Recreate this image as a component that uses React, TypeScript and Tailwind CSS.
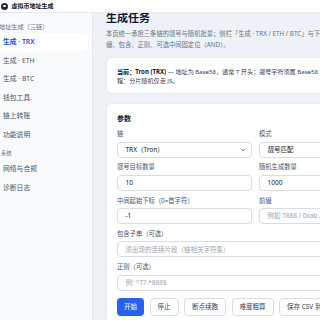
import { ChevronDown } from 'lucide-react'

const navItems = ['生成 · ETH', '生成 · BTC', '钱包工具', '链上转账', '功能说明']
const sysItems = ['网络与合规', '诊断日志']

const Field = ({ label, value, placeholder, wide, select }: { label: string; value?: string; placeholder?: string; wide?: boolean; select?: boolean }) => {
  return (
    <div className={`flex flex-col gap-[3.5px] ${wide ? 'col-span-2' : ''}`}>
      <div className="text-[6.3px] leading-[9px] h-[9px] text-[#475569] whitespace-nowrap">{label}</div>
      <div className="h-[16px] rounded-[4px] border border-[#d6dde6] bg-white flex items-center pl-[7.5px] pr-[5px] text-[6.5px] whitespace-nowrap overflow-hidden">
        {value ? <span className="text-[#111827] flex-1">{value}</span> : <span className="text-[#9aa3af] flex-1">{placeholder}</span>}
        {select && <ChevronDown size={6} strokeWidth={3} className="text-[#374151]" />}
      </div>
    </div>
  )
}

const App = () => {
  return (
    <div className="w-[320px] h-[320px] overflow-hidden flex flex-col bg-[#eef2f7] font-['Noto_Sans','Noto_Sans_CJK_SC',sans-serif]">
      <header className="h-[13px] shrink-0 bg-white border-b border-[#e5e7eb] flex items-center gap-[3.5px] pl-[1px] relative z-10">
        <div className="w-[7px] h-[7px] rounded-full bg-[#1f2937] flex items-center justify-center">
          <div className="w-[2.5px] h-[2.5px] rounded-full bg-white" />
        </div>
        <span className="text-[6px] font-bold text-[#111827] leading-none">虚拟币地址生成</span>
      </header>
      <div className="flex flex-1 min-h-0">
        <aside className="w-[93px] shrink-0 bg-[#f8fafc] border-r border-[#e2e8f0]">
          <div className="-ml-[4px] mr-[4px]">
            <div className="pt-[10px] pb-[2px] pl-[3px] text-[6.2px] leading-[8px] text-[#64748b] whitespace-nowrap">地址生成（三链）</div>
            <div className="h-[18.5px] flex items-center pl-[7px] rounded-[4px] bg-white shadow-[0_0_1px_rgba(15,23,42,0.12)] text-[6.8px] font-semibold text-[#1d4ed8]">生成 · TRX</div>
            {navItems.map((item) => (
              <div key={item} className="h-[18.5px] flex items-center pl-[7px] text-[6.8px] text-[#475569]">{item}</div>
            ))}
            <div className="pt-[5px] pb-[3px] pl-[5px] text-[5.3px] leading-[8px] text-[#64748b]">系统</div>
            {sysItems.map((item) => (
              <div key={item} className="h-[18.5px] flex items-center pl-[7px] text-[6.8px] text-[#475569]">{item}</div>
            ))}
          </div>
        </aside>
        <main className="flex-1 min-w-0 overflow-hidden pl-[13px]">
          <div className="w-[299px]">
            <h1 className="-mt-[1px] text-[11px] leading-[12px] h-[12px] font-bold text-[#0f172a] whitespace-nowrap">生成任务</h1>
            <div className="mt-[3.5px] text-[6.3px] leading-[11px] text-[#64748b] whitespace-nowrap">
              <div>本页统一承担三条链的靓号与随机批量；侧栏「生成 · TRX / ETH / BTC」与下拉一致；靓号支持前缀、后</div>
              <div>缀、包含、正则、可选中间固定位（AND）。</div>
            </div>
            <div className="mt-[7.5px] bg-white rounded-[6px] border border-[#e6ebf2] px-[10px] pt-[9px] pb-[8px] text-[6.1px] leading-[9px] text-[#334155] whitespace-nowrap">
              <div><span className="font-bold text-[#0f172a]">当前：Tron (TRX)</span> — 地址为 Base58，通常 T 开头；靓号字符须属 Base58（不含 0 O I l）；进</div>
              <div>程：分片随机仅走 JS。</div>
            </div>
            <div className="mt-[9px] bg-white rounded-[6px] border border-[#e6ebf2] px-[10px] pt-[9.5px] pb-[10px]">
              <div className="text-[7px] leading-[10px] font-semibold text-[#0f172a]">参数</div>
              <div className="mt-[5.5px] grid grid-cols-2 gap-x-[7px] gap-y-[4.8px]">
                <Field label="链" value="TRX（Tron）" select />
                <Field label="模式" value="靓号匹配" />
                <Field label="靓号目标数量" value="10" />
                <Field label="随机生成数量" value="1000" />
                <Field label="中间起始下标（0=首字符）" value="-1" />
                <Field label="前缀" placeholder="例如 T888 / 0xab / 1abc" />
                <Field label="包含子串（可选）" placeholder="须出现的连续片段（链相关字符集）" wide />
                <Field label="正则（可选）" placeholder="例: ^T7.*888$" wide />
              </div>
              <div className="mt-[7.5px] flex gap-[5.5px] text-[6.5px] whitespace-nowrap">
                <button className="h-[18px] px-[7px] rounded-[4px] bg-[#2563eb] text-white">开始</button>
                <button className="h-[18px] px-[7px] rounded-[4px] border border-[#d6dde6] bg-white text-[#334155]">停止</button>
                <button className="h-[18px] px-[7px] rounded-[4px] border border-[#d6dde6] bg-white text-[#334155]">断点续跑</button>
                <button className="h-[18px] px-[7px] rounded-[4px] border border-[#d6dde6] bg-white text-[#334155]">难度粗算</button>
                <button className="h-[18px] px-[7px] rounded-[4px] border border-[#d6dde6] bg-white text-[#334155]">保存 CSV 到文件</button>
              </div>
            </div>
          </div>
        </main>
      </div>
    </div>
  )
}

export default App
